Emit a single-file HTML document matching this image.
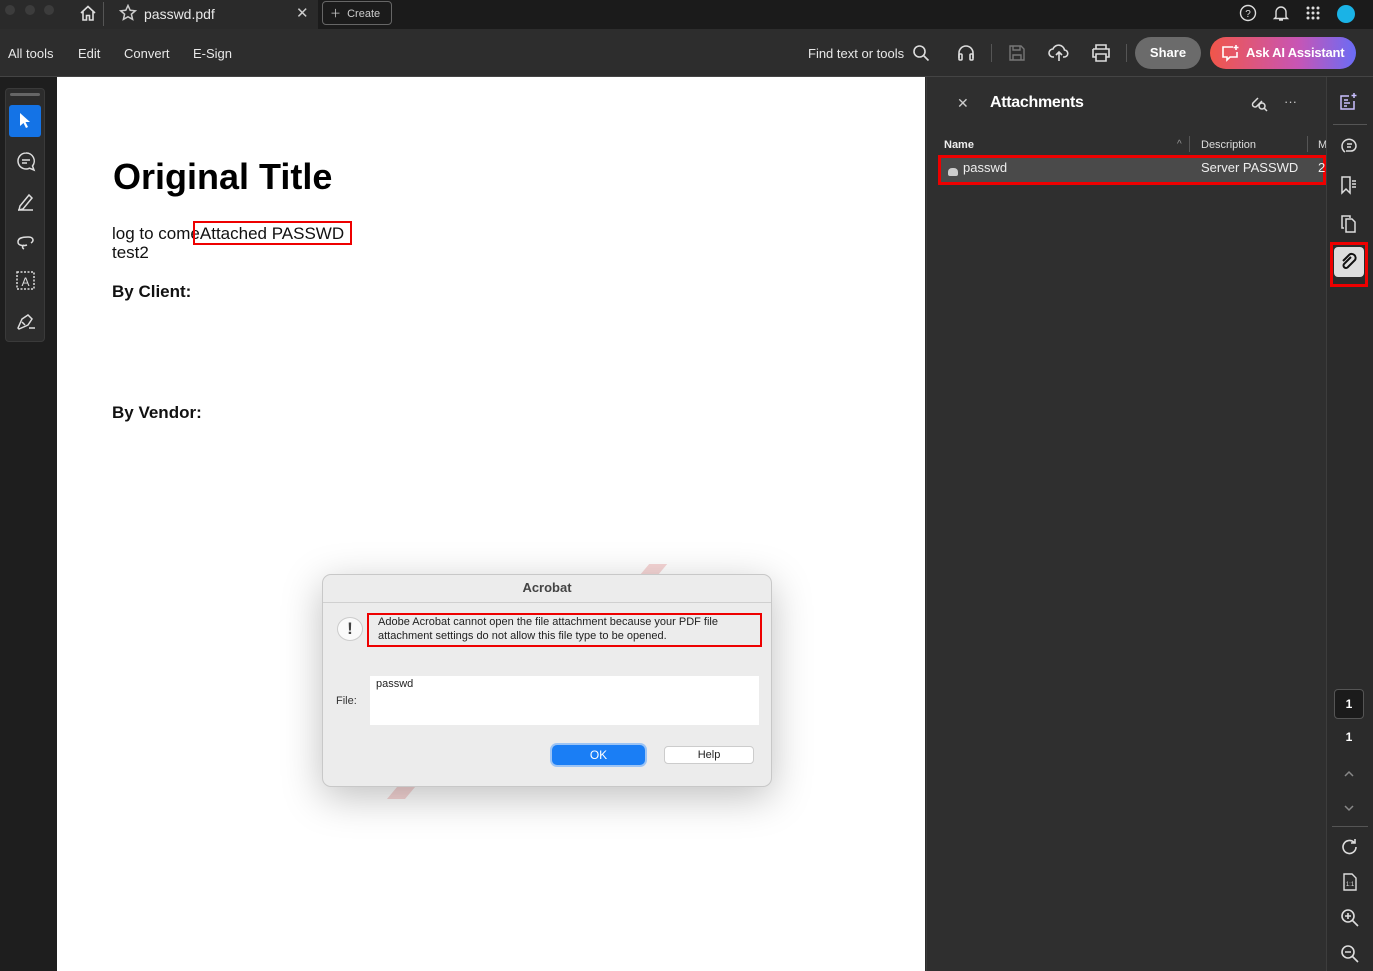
<!DOCTYPE html>
<html><head><meta charset="utf-8"><style>
*{box-sizing:border-box;margin:0;padding:0}
body{width:1373px;height:971px;overflow:hidden;background:#2b2b2b;font-family:"Liberation Sans",sans-serif;position:relative;color:#eee}
.a{position:absolute}
.t{font-size:13px;color:#e8e8e8}
svg{position:absolute}
</style></head><body>
<div class="a" style="left:0;top:0;width:1373px;height:29px;background:#1b1b1b"></div>
<div class="a" style="left:0;top:0;width:318px;height:29px;background:#2a2a2a"></div>
<div class="a" style="left:5px;top:5px;width:10px;height:10px;border-radius:50%;background:#3c3c3c"></div>
<div class="a" style="left:25px;top:5px;width:10px;height:10px;border-radius:50%;background:#3c3c3c"></div>
<div class="a" style="left:44px;top:5px;width:10px;height:10px;border-radius:50%;background:#3c3c3c"></div>
<svg style="left:79px;top:4px" width="18" height="18" viewBox="0 0 18 18" fill="none" stroke="#ddd" stroke-width="1.6"><path d="M2 9L9 2.5L16 9M4 7.5V16H7.5V11.5H10.5V16H14V7.5"/></svg>
<div class="a" style="left:103px;top:2px;width:1px;height:24px;background:#555"></div>
<svg style="left:119px;top:4px" width="18" height="18" viewBox="0 0 18 18" fill="none" stroke="#ccc" stroke-width="1.5"><path d="M9 1.5L11.2 6.3L16.3 6.8L12.4 10.2L13.6 15.4L9 12.7L4.4 15.4L5.6 10.2L1.7 6.8L6.8 6.3Z"/></svg>
<div class="a t" style="left:144px;top:6px;font-size:14px">passwd.pdf</div>
<div class="a t" style="left:296px;top:4px;font-size:15px;color:#ccc">✕</div>
<div class="a" style="left:322px;top:1px;width:70px;height:24px;border:1px solid #666;border-radius:4px"></div>
<div class="a t" style="left:330px;top:5px;font-size:11px;color:#ccc">＋&nbsp; Create</div>
<svg style="left:1239px;top:4px" width="18" height="18" viewBox="0 0 18 18" fill="none" stroke="#ddd" stroke-width="1.4"><circle cx="9" cy="9" r="7.5"/><text x="9" y="13" font-size="10" text-anchor="middle" fill="#ddd" stroke="none" font-family="Liberation Sans">?</text></svg>
<svg style="left:1272px;top:4px" width="18" height="18" viewBox="0 0 18 18" fill="none" stroke="#ddd" stroke-width="1.4"><path d="M4 13V8a5 5 0 0 1 10 0v5l1.5 1.5h-13ZM7 16h4"/></svg>
<svg style="left:1305px;top:5px" width="16" height="16" viewBox="0 0 16 16" fill="#ddd"><circle cx="3" cy="3" r="1.5"/><circle cx="8" cy="3" r="1.5"/><circle cx="13" cy="3" r="1.5"/><circle cx="3" cy="8" r="1.5"/><circle cx="8" cy="8" r="1.5"/><circle cx="13" cy="8" r="1.5"/><circle cx="3" cy="13" r="1.5"/><circle cx="8" cy="13" r="1.5"/><circle cx="13" cy="13" r="1.5"/></svg>
<div class="a" style="left:1337px;top:5px;width:18px;height:18px;border-radius:50%;background:#1ab3e6"></div>
<div class="a" style="left:0;top:29px;width:1373px;height:48px;background:#2d2d2d;border-bottom:1px solid #444"></div>
<div class="a t" style="left:8px;top:46px;font-size:13px">All tools</div>
<div class="a t" style="left:78px;top:46px;font-size:13px">Edit</div>
<div class="a t" style="left:124px;top:46px;font-size:13px">Convert</div>
<div class="a t" style="left:193px;top:46px;font-size:13px">E-Sign</div>
<div class="a t" style="left:808px;top:46px;font-size:13px">Find text or tools</div>
<svg style="left:912px;top:44px" width="18" height="18" viewBox="0 0 18 18" fill="none" stroke="#ddd" stroke-width="1.6"><circle cx="7.5" cy="7.5" r="5.5"/><path d="M11.5 11.5L16.5 16.5"/></svg>
<svg style="left:956px;top:44px" width="20" height="18" viewBox="0 0 20 18" fill="none" stroke="#ddd" stroke-width="1.6"><path d="M3 14V9a7 7 0 0 1 14 0v5"/><rect x="3" y="10" width="3" height="6" rx="1"/><rect x="14" y="10" width="3" height="6" rx="1"/></svg>
<div class="a" style="left:991px;top:44px;width:1px;height:18px;background:#555"></div>
<svg style="left:1008px;top:44px" width="18" height="18" viewBox="0 0 18 18" fill="none" stroke="#777" stroke-width="1.4"><path d="M2 2h11l3 3v11H2ZM5 2v4h7V2M5 16v-5h8v5"/></svg>
<svg style="left:1048px;top:43px" width="22" height="20" viewBox="0 0 22 20" fill="none" stroke="#ddd" stroke-width="1.6"><path d="M6 14H5a4 4 0 0 1 0-8 6 6 0 0 1 11.5 1A3.5 3.5 0 0 1 16 14h-1M11 18V9M8 12l3-3 3 3"/></svg>
<svg style="left:1091px;top:44px" width="20" height="18" viewBox="0 0 20 18" fill="none" stroke="#ddd" stroke-width="1.6"><path d="M5 5V1h10v4M2 5h16v8h-3M5 13H2V5M5 10h10v7H5Z"/></svg>
<div class="a" style="left:1126px;top:44px;width:1px;height:18px;background:#555"></div>
<div class="a" style="left:1135px;top:37px;width:66px;height:32px;border-radius:16px;background:#6b6b6b;color:#fff;font-weight:bold;font-size:13px;text-align:center;line-height:32px">Share</div>
<div class="a" style="left:1210px;top:37px;width:146px;height:32px;border-radius:16px;background:linear-gradient(90deg,#f0564a,#c855b4 60%,#6a6cf6);color:#fff;font-weight:bold;font-size:13px;line-height:32px;padding-left:36px;letter-spacing:-0.2px">Ask AI Assistant</div>
<svg style="left:1221px;top:44px" width="20" height="18" viewBox="0 0 20 18" fill="none" stroke="#fff" stroke-width="1.6"><path d="M12 3H2v10h4v3l3-3h7V8M15 1v5M12.5 3.5h5"/></svg>
<div class="a" style="left:0;top:77px;width:57px;height:894px;background:#1e1e1e"></div>
<div class="a" style="left:5px;top:88px;width:40px;height:254px;border-radius:4px;background:#2c2c2c;border:1px solid #3a3a3a"></div>
<div class="a" style="left:10px;top:93px;width:30px;height:3px;border-radius:2px;background:#666"></div>
<div class="a" style="left:9px;top:105px;width:32px;height:32px;border-radius:3px;background:#1473e6"></div>
<svg style="left:18px;top:112px" width="14" height="18" viewBox="0 0 14 18" fill="#fff"><path d="M2 1v13l3.5-3 2.5 5 2-1-2.5-5H12Z"/></svg>
<svg style="left:15px;top:150px" width="24" height="24" viewBox="0 0 24 24" fill="none" stroke="#ddd" stroke-width="1.5"><path d="M11 3a8 8 0 1 0 3.5 15.2L19 20l-1.5-4A8 8 0 0 0 11 3ZM7 10h8M7 13h5"/></svg>
<svg style="left:15px;top:190px" width="24" height="24" viewBox="0 0 24 24" fill="none" stroke="#ddd" stroke-width="1.5"><path d="M5 16l9-11 3 3-9 11-4 1ZM3 20h15"/></svg>
<svg style="left:15px;top:230px" width="24" height="24" viewBox="0 0 24 24" fill="none" stroke="#ddd" stroke-width="1.5"><path d="M16 13c3-2 3-6-3-6S3 8 3 12s6 4 9 3M9 15c-2 1-2 3 0 4"/></svg>
<svg style="left:15px;top:270px" width="24" height="24" viewBox="0 0 24 24" fill="none" stroke="#ddd" stroke-width="1.5" stroke-dasharray="2 1.5"><rect x="2" y="2" width="17" height="17"/><text x="10.5" y="16" font-size="12" text-anchor="middle" fill="#ddd" stroke="none" font-family="Liberation Sans">A</text></svg>
<svg style="left:15px;top:310px" width="24" height="24" viewBox="0 0 24 24" fill="none" stroke="#ddd" stroke-width="1.5"><path d="M3 18l4-9 6-4 4 4-4 6-9 4ZM7 12l3 3M14 18h6"/></svg>
<div class="a" style="left:57px;top:77px;width:868px;height:894px;background:#fff"></div>
<div class="a" style="left:113px;top:156px;font-size:36px;font-weight:bold;color:#000">Original Title</div>
<div class="a" style="left:112px;top:224px;font-size:17px;color:#111;line-height:19px">log to comeAttached PASSWD<br>test2</div>
<div class="a" style="left:193px;top:221px;width:159px;height:24px;border:2px solid #e00"></div>
<div class="a" style="left:112px;top:282px;font-size:17px;font-weight:bold;color:#111">By Client:</div>
<div class="a" style="left:112px;top:403px;font-size:17px;font-weight:bold;color:#111">By Vendor:</div>
<div class="a" style="left:930px;top:502px;width:3px;height:44px;border-radius:2px;background:#888"></div>
<div class="a" style="left:645px;top:564px;width:18px;height:10px;background:#f6d6d6;transform:skewX(-40deg)"></div>
<div class="a" style="left:392px;top:787px;width:18px;height:12px;background:#f6d6d6;transform:skewX(-40deg)"></div>
<div class="a" style="left:322px;top:574px;width:450px;height:213px;background:#ececec;border:1px solid #c8c8c8;border-radius:9px;box-shadow:0 10px 40px rgba(0,0,0,.25)"></div>
<div class="a" style="left:322px;top:580px;width:450px;text-align:center;font-size:13px;font-weight:bold;color:#444">Acrobat</div>
<div class="a" style="left:323px;top:602px;width:448px;height:1px;background:#d0d0d0"></div>
<div class="a" style="left:337px;top:617px;width:26px;height:24px;border-radius:50%;background:#fafafa;border:1px solid #ccc;color:#444;font-weight:bold;font-size:17px;text-align:center;line-height:22px">!</div>
<div class="a" style="left:367px;top:613px;width:395px;height:34px;border:2px solid #e00"></div>
<div class="a" style="left:378px;top:615px;font-size:11px;color:#222;line-height:14px">Adobe Acrobat cannot open the file attachment because your PDF file<br>attachment settings do not allow this file type to be opened.</div>
<div class="a" style="left:370px;top:676px;width:389px;height:49px;background:#fff"></div>
<div class="a" style="left:376px;top:678px;font-size:11px;color:#222">passwd</div>
<div class="a" style="left:336px;top:695px;font-size:11px;color:#333">File:</div>
<div class="a" style="left:552px;top:745px;width:93px;height:20px;border-radius:5px;background:#1a7ef5;box-shadow:0 0 0 2px #9cc4f5;color:#fff;font-size:12px;text-align:center;line-height:20px">OK</div>
<div class="a" style="left:664px;top:746px;width:90px;height:18px;border-radius:4px;background:#fff;border:1px solid #ccc;color:#222;font-size:11px;text-align:center;line-height:16px">Help</div>
<div class="a" style="left:926px;top:77px;width:400px;height:894px;background:#2f2f2f;border-left:1px solid #3a3a3a"></div>
<div class="a t" style="left:957px;top:95px;font-size:14px;color:#ccc">✕</div>
<div class="a" style="left:990px;top:94px;font-size:16px;font-weight:bold;color:#fff;letter-spacing:-0.3px">Attachments</div>
<svg style="left:1249px;top:94px" width="20" height="18" viewBox="0 0 20 18" fill="none" stroke="#ddd" stroke-width="1.5"><path d="M9 4L4 9a2.5 2.5 0 0 0 3.5 3.5L13 7"/><circle cx="13" cy="12" r="3"/><path d="M15 14l3 3"/></svg>
<div class="a t" style="left:1284px;top:94px;color:#ccc">···</div>
<div class="a" style="left:944px;top:139px;font-size:11px;font-weight:bold;color:#eee">Name</div>
<div class="a" style="left:1177px;top:139px;font-size:10px;color:#999">^</div>
<div class="a" style="left:1189px;top:136px;width:1px;height:16px;background:#555"></div>
<div class="a" style="left:1201px;top:139px;font-size:11px;color:#ddd">Description</div>
<div class="a" style="left:1307px;top:136px;width:1px;height:16px;background:#555"></div>
<div class="a" style="left:1318px;top:139px;font-size:11px;color:#ddd">M</div>
<div class="a" style="left:938px;top:155px;width:388px;height:30px;background:#4a4a4a;border:3px solid #e00"></div>
<div class="a" style="left:948px;top:168px;width:10px;height:8px;border-radius:4px 4px 2px 2px;background:#ccc"></div>
<div class="a" style="left:963px;top:160px;font-size:13px;color:#eee">passwd</div>
<div class="a" style="left:1201px;top:160px;font-size:13px;color:#eee">Server PASSWD</div>
<div class="a" style="left:1318px;top:160px;font-size:13px;color:#eee">2</div>
<div class="a" style="left:1326px;top:77px;width:47px;height:894px;background:#2b2b2b;border-left:1px solid #3d3d3d"></div>
<svg style="left:1339px;top:92px" width="20" height="20" viewBox="0 0 20 20" fill="none" stroke="#c9c0ff" stroke-width="1.5"><path d="M15 9v8H2V4h8M5 8h4M5 11h6M5 14h3M15 1v5M12.5 3.5h5"/></svg>
<div class="a" style="left:1333px;top:124px;width:34px;height:1px;background:#555"></div>
<svg style="left:1339px;top:136px" width="20" height="20" viewBox="0 0 20 20" fill="none" stroke="#ddd" stroke-width="1.5"><path d="M6 16A7 7 0 1 1 17 10a5 5 0 0 1-5 5H7M8 8h5M8 11h4"/></svg>
<svg style="left:1339px;top:175px" width="20" height="20" viewBox="0 0 20 20" fill="none" stroke="#ddd" stroke-width="1.5"><path d="M3 2h8v16l-4-4-4 4ZM13 6h4M13 9h4M13 12h4"/></svg>
<svg style="left:1339px;top:214px" width="20" height="20" viewBox="0 0 20 20" fill="none" stroke="#ddd" stroke-width="1.5"><path d="M5 14H3V2h8v2M7 5h6l3 3v10H7Z"/></svg>
<div class="a" style="left:1330px;top:242px;width:38px;height:45px;border:3px solid #e00"></div>
<div class="a" style="left:1334px;top:247px;width:30px;height:30px;border-radius:4px;background:#ddd"></div>
<svg style="left:1339px;top:252px" width="20" height="20" viewBox="0 0 20 20" fill="none" stroke="#111" stroke-width="2"><path d="M12 5L5 12a2.5 2.5 0 0 0 3.5 3.5L16 8a4 4 0 0 0-5.5-5.5L4 9"/></svg>
<div class="a" style="left:1334px;top:689px;width:30px;height:30px;border-radius:4px;background:#1b1b1b;border:1px solid #555;color:#fff;font-size:12px;font-weight:bold;text-align:center;line-height:28px">1</div>
<div class="a" style="left:1334px;top:730px;width:30px;text-align:center;color:#fff;font-size:12px;font-weight:bold">1</div>
<svg style="left:1343px;top:769px" width="12" height="10" viewBox="0 0 12 10" fill="none" stroke="#888" stroke-width="1.5"><path d="M2 7l4-4 4 4"/></svg>
<svg style="left:1343px;top:803px" width="12" height="10" viewBox="0 0 12 10" fill="none" stroke="#888" stroke-width="1.5"><path d="M2 3l4 4 4-4"/></svg>
<div class="a" style="left:1332px;top:826px;width:36px;height:1px;background:#555"></div>
<svg style="left:1340px;top:837px" width="20" height="20" viewBox="0 0 20 20" fill="none" stroke="#ddd" stroke-width="1.6"><path d="M16 10a6.5 6.5 0 1 1-2-4.7M15 2v4h-4"/></svg>
<svg style="left:1340px;top:872px" width="20" height="20" viewBox="0 0 20 20" fill="none" stroke="#ddd" stroke-width="1.4"><path d="M4 2h8l4 4v12H4Z"/><text x="10" y="14" font-size="6" text-anchor="middle" fill="#ddd" stroke="none" font-family="Liberation Sans">1:1</text></svg>
<svg style="left:1340px;top:908px" width="20" height="20" viewBox="0 0 20 20" fill="none" stroke="#ddd" stroke-width="1.6"><circle cx="8" cy="8" r="6"/><path d="M12.5 12.5L18 18M5 8h6M8 5v6"/></svg>
<svg style="left:1340px;top:944px" width="20" height="20" viewBox="0 0 20 20" fill="none" stroke="#ddd" stroke-width="1.6"><circle cx="8" cy="8" r="6"/><path d="M12.5 12.5L18 18M5 8h6"/></svg>
</body></html>
